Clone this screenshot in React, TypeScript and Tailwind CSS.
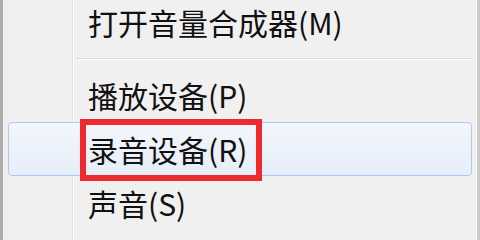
import React from "react";

const font = { fontFamily: '"Noto Sans CJK SC", "Noto Sans", sans-serif' };

const Item = ({ label, active }: { label: string; active?: boolean }) => (
  <div
    className={
      "relative z-10 h-[54px] flex items-center pl-[79px] text-[30px] leading-none text-[#111] rounded-[4px] border " +
      (active
        ? "border-[#a9c8f2] bg-gradient-to-b from-[#f3f6fb] to-[#e6eef9]"
        : "border-transparent")
    }
  >
    {label}
  </div>
);

export default function App() {
  return (
    <div
      className="relative w-[480px] h-[240px] overflow-hidden bg-[#f0f0f0] border-l-[3px] border-[#adadad]"
      style={font}
    >
      {/* gutter line */}
      <div className="absolute left-[69px] top-0 bottom-0 w-[3px] flex">
        <div className="w-[1px] bg-[#e0e0e0]" />
        <div className="w-[1px] bg-white" />
      </div>
      {/* right edge */}
      <div className="absolute right-0 top-0 bottom-0 w-[4px] flex">
        <div className="w-[1px] bg-white" />
        <div className="flex-1 bg-[#c9c9c9]" />
      </div>

      <div className="flex flex-col pl-[5px] pr-[8px] mt-[-5px]">
        <Item label="打开音量合成器(M)" />
        <div className="h-[19px] flex flex-col justify-center pl-[68px]">
          <div className="h-[1px] bg-[#d9d9d9]" />
          <div className="h-[1px] bg-white" />
        </div>
        <Item label="播放设备(P)" />
        <Item label="录音设备(R)" active />
        <Item label="声音(S)" />
      </div>

      {/* annotation box */}
      <div className="absolute left-[77px] top-[119px] w-[182px] h-[62px] border-[6px] border-[#ee2a2e] z-20" />
    </div>
  );
}
